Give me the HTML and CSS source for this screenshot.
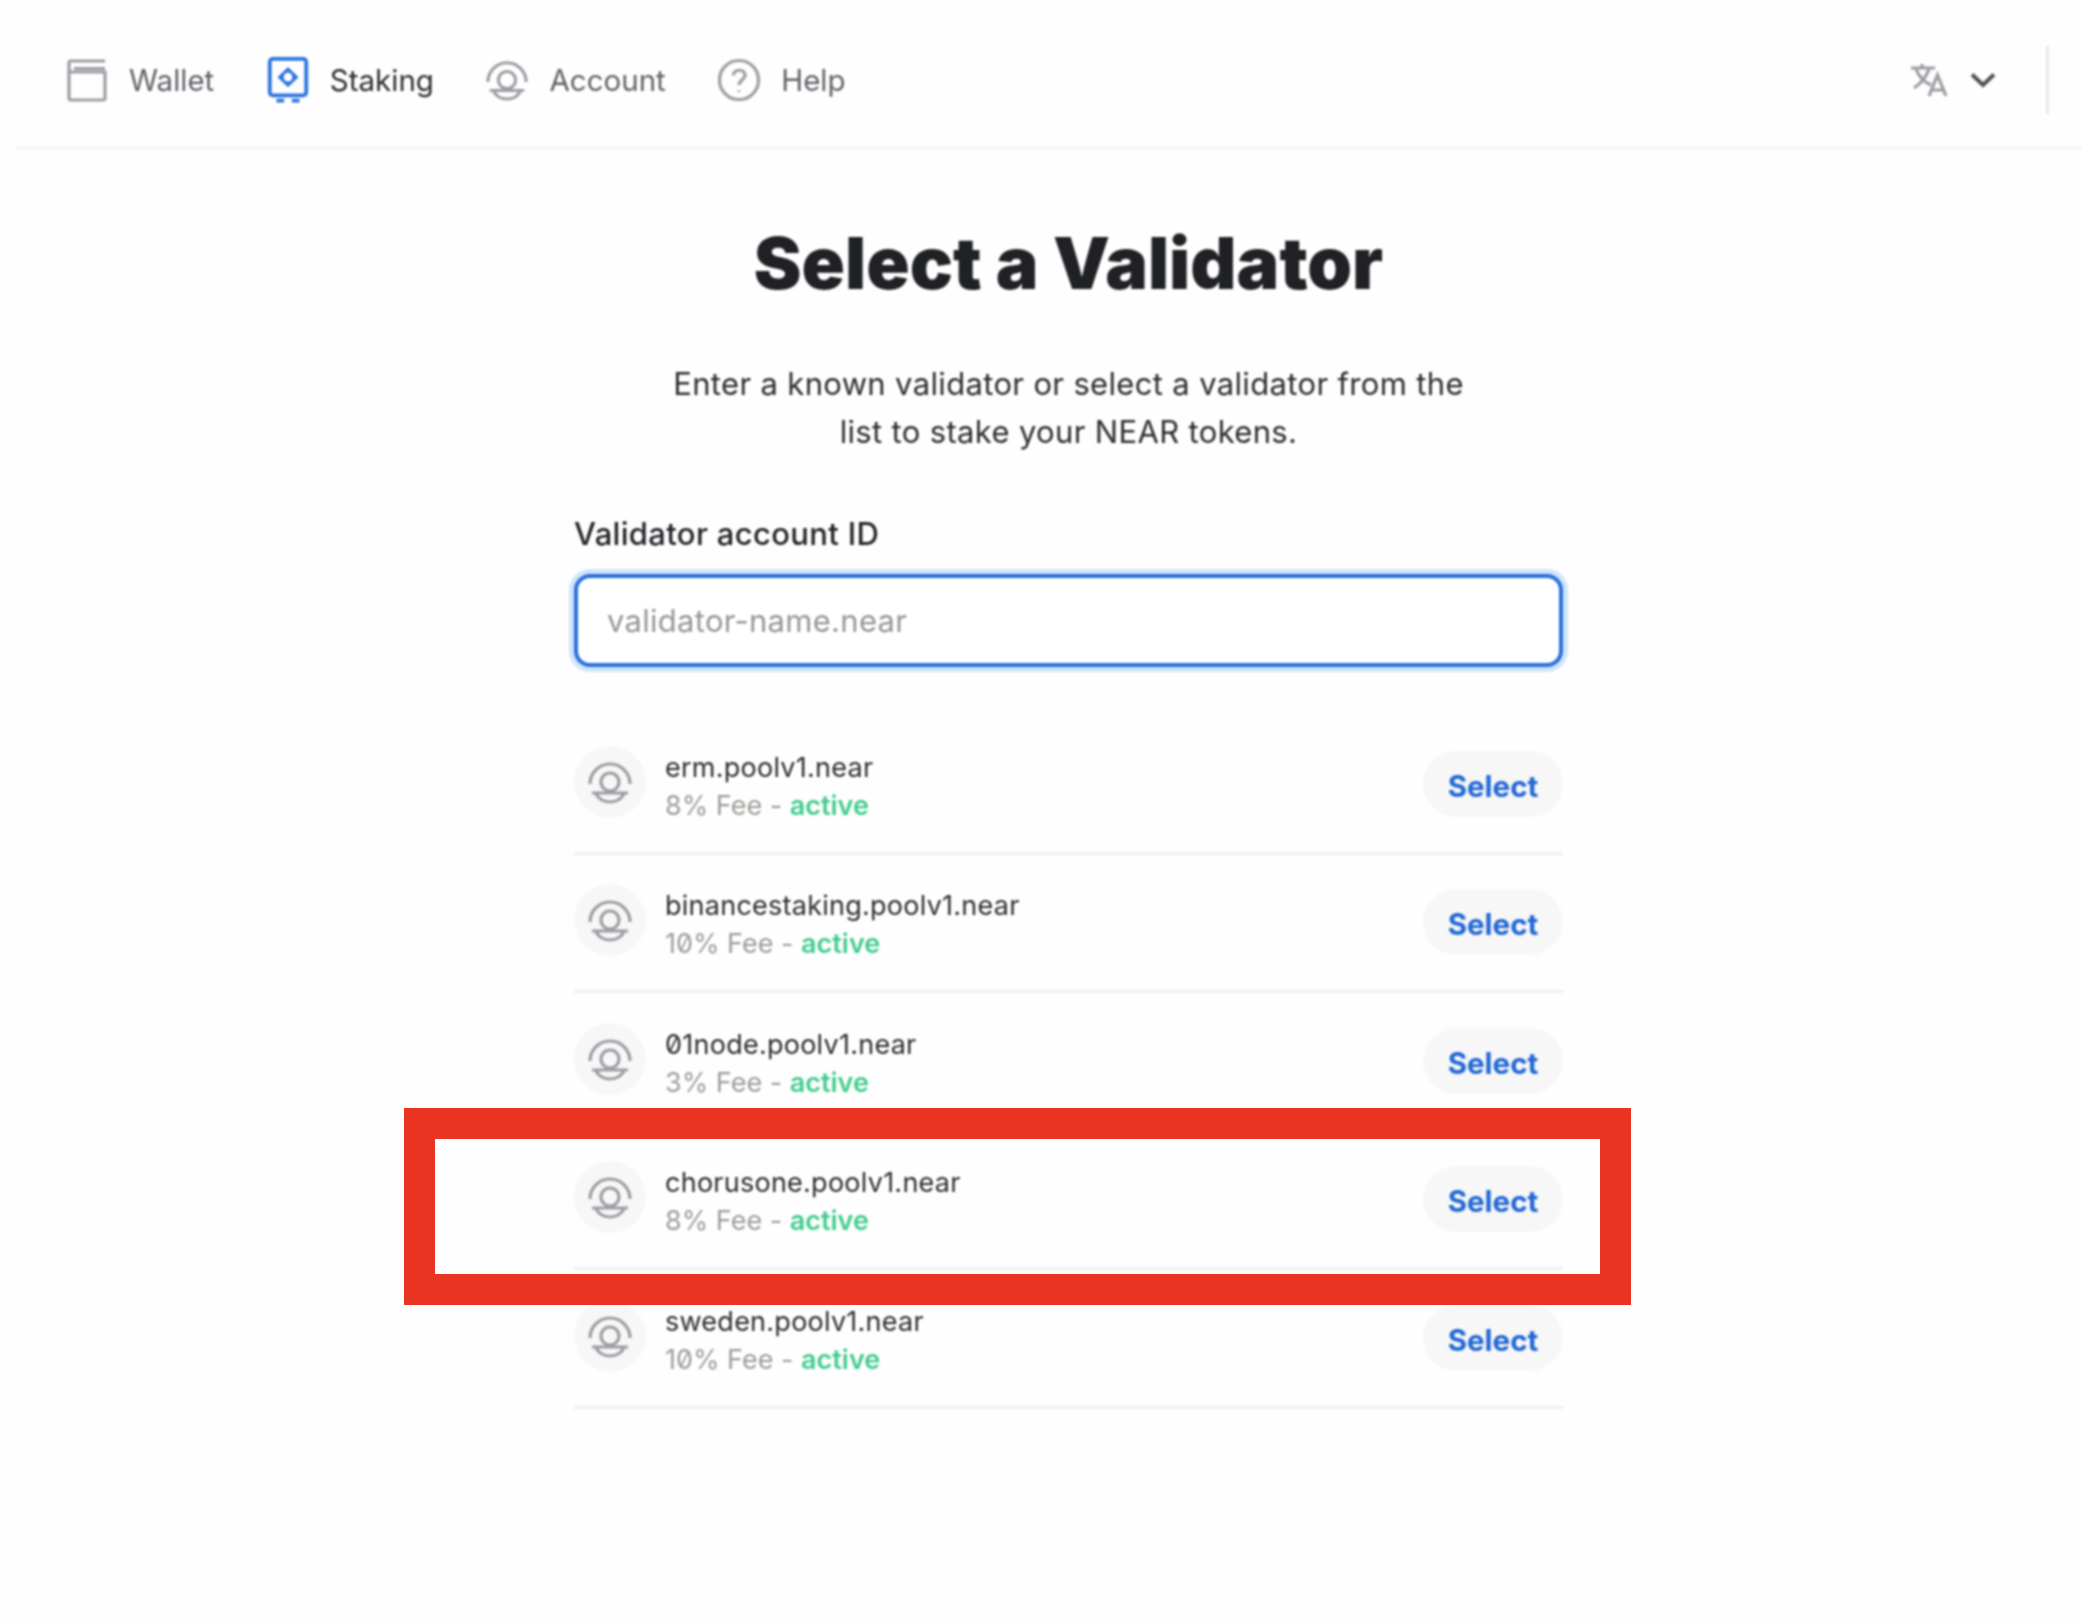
FILE: index.html
```html
<!DOCTYPE html>
<html lang="en">
<head>
    <meta charset="UTF-8">
    <meta name="viewport" content="width=device-width, initial-scale=1.0">
    <title>Select a Validator</title>
    <link rel="stylesheet" href="styles.css">
</head>
<body>
    <svg class="defs" width="0" height="0">
        <symbol id="user" viewBox="0 0 44 44">
            <path d="M2 24A20 20 0 0 1 42 24" />
            <circle cx="22" cy="22" r="9" />
            <path d="M4 33H40M8 33C10 39 16 42 22 42S34 39 36 33" />
        </symbol>
    </svg>

    <div class="page">
        <header class="topbar">
            <nav class="nav">
                <a class="nav-item">
                    <svg class="nav-icon" viewBox="0 0 42 44">
                        <path d="M3 14V5a2 2 0 0 1 2-2h34M3 14v26a2 2 0 0 0 2 2h32a2 2 0 0 0 2-2V14H3M8 10.500H39" />
                    </svg>
                    Wallet
                </a>
                <a class="nav-item active">
                    <svg class="nav-icon" viewBox="0 0 42 48">
                        <rect x="2" y="2" width="38" height="38" rx="3" />
                        <path class="solid" d="M21 10.500L32 21 21 31.500 10 21Z" />
                        <circle class="hole" cx="21" cy="21" r="4.500" />
                        <path d="M9 45.500H17M25 45.500H33" />
                    </svg>
                    Staking
                </a>
                <a class="nav-item">
                    <svg class="nav-icon"><use href="#user" /></svg>
                    Account
                </a>
                <a class="nav-item">
                    <svg class="nav-icon" viewBox="0 0 42 44">
                        <circle cx="21" cy="22" r="19.500" />
                        <path d="M15.500 17.500C15.500 10.500 27 10.500 27 17.500 27 21.500 21 22 21 27" />
                        <path d="M21 32.500V34" />
                    </svg>
                    Help
                </a>
            </nav>
            <div class="lang">
                <svg class="lang-icon" viewBox="0 0 38 34">
                    <path d="M1 5H25M12 1V5M19 6C16 15 10 21 4 25M6 6C9 14 14 19 21 22" />
                    <path d="M19 33L27.500 12 36 33M22 27H33" />
                </svg>
                <svg class="chevron" viewBox="0 0 26 16">
                    <path d="M2 2.500L13 13 24 2.500" />
                </svg>
            </div>
            <div class="divider"></div>
        </header>

        <main class="content">
            <h1 class="title">Select a Validator</h1>
            <p class="intro">Enter a known validator or select a validator from the<br>list to stake your NEAR tokens.</p>

            <label class="field-label" for="validator">Validator account ID</label>
            <input class="field" id="validator" type="text" placeholder="validator-name.near">

            <ul class="validators">
                <li class="validator">
                    <span class="avatar"><svg><use href="#user" /></svg></span>
                    <div class="info">
                        <div class="name">erm.poolv1.near</div>
                        <div class="fee">8% Fee - <span class="status">active</span></div>
                    </div>
                    <button class="select">Select</button>
                </li>
                <li class="validator">
                    <span class="avatar"><svg><use href="#user" /></svg></span>
                    <div class="info">
                        <div class="name">binancestaking.poolv1.near</div>
                        <div class="fee">10% Fee - <span class="status">active</span></div>
                    </div>
                    <button class="select">Select</button>
                </li>
                <li class="validator">
                    <span class="avatar"><svg><use href="#user" /></svg></span>
                    <div class="info">
                        <div class="name">01node.poolv1.near</div>
                        <div class="fee">3% Fee - <span class="status">active</span></div>
                    </div>
                    <button class="select">Select</button>
                </li>
                <li class="validator">
                    <span class="avatar"><svg><use href="#user" /></svg></span>
                    <div class="info">
                        <div class="name">chorusone.poolv1.near</div>
                        <div class="fee">8% Fee - <span class="status">active</span></div>
                    </div>
                    <button class="select">Select</button>
                </li>
                <li class="validator">
                    <span class="avatar"><svg><use href="#user" /></svg></span>
                    <div class="info">
                        <div class="name">sweden.poolv1.near</div>
                        <div class="fee">10% Fee - <span class="status">active</span></div>
                    </div>
                    <button class="select">Select</button>
                </li>
            </ul>
        </main>
    </div>

    <div class="highlight"></div>
</body>
</html>
```

FILE: styles.css
```css
* {
    box-sizing: border-box;
}

body {
    margin: 0;
    height: 1624px;
    overflow: hidden;
    position: relative;
    background-color: #fefefe;
    font-family: "Inter", "Liberation Sans", sans-serif;
    font-variant-numeric: slashed-zero;
    color: #2b2c30;
}

.defs {
    position: absolute;
}

/* the source is an upscaled image, everything but the red frame is soft */
.page {
    filter: blur(0.9px);
}

/* top bar */

.topbar {
    display: flex;
    align-items: center;
    height: 150px;
    margin-left: 16px;
    padding: 13px 33px 0 50px;
    border-bottom: 4px solid #f6f6f6;
}

.nav {
    display: flex;
    align-items: center;
    gap: 52.5px;
}

.nav-item {
    display: flex;
    align-items: center;
    gap: 21px;
    font-size: 29.5px;
    color: #606168;
}

.nav-item.active {
    color: #2b2c30;
}

.nav-icon {
    width: 42px;
    height: 46px;
    fill: none;
    stroke: #9c9da3;
    stroke-width: 3.2;
}

.active .nav-icon {
    stroke: #2b75e0;
    stroke-width: 4;
}

.active .nav-icon .solid {
    fill: #2b75e0;
    stroke: none;
}

.active .nav-icon .hole {
    fill: #fff;
    stroke: none;
}

.lang {
    display: flex;
    align-items: center;
    gap: 22px;
    margin-left: auto;
}

.lang-icon {
    width: 38px;
    height: 34px;
    fill: none;
    stroke: #9c9da3;
    stroke-width: 3.2;
}

.chevron {
    width: 26px;
    height: 16px;
    fill: none;
    stroke: #52535a;
    stroke-width: 4;
}

.divider {
    width: 3px;
    height: 68px;
    margin-left: 50px;
    background-color: #e8e8ea;
}

/* main column */

.content {
    width: 989px;
    margin-left: 574px;
}

.title {
    margin: 68px 0 0;
    font-size: 71.7px;
    line-height: 90px;
    font-weight: 900;
    text-align: center;
    color: #1f2124;
}

.intro {
    margin: 52px 0 0;
    font-size: 31px;
    line-height: 48px;
    letter-spacing: 0.34px;
    text-align: center;
}

.field-label {
    display: block;
    margin-top: 54px;
    font-size: 31px;
    line-height: 48px;
    font-weight: 500;
    letter-spacing: 0.33px;
    color: #222327;
}

.field {
    display: block;
    width: 100%;
    height: 93px;
    margin-top: 16px;
    padding: 0 29px;
    border: 4px solid #2b6fd9;
    border-radius: 16px;
    box-shadow: 0 0 0 5px #cfe5fd;
    font-family: inherit;
    font-size: 31px;
    letter-spacing: 0.28px;
    color: #2b2c30;
    background-color: #fff;
    outline: none;
}

.field::placeholder {
    color: #969696;
}

.validators {
    margin: 49px 0 0;
    padding: 0;
    list-style: none;
}

.validator {
    display: flex;
    align-items: center;
    height: 138.5px;
    border-bottom: 3px solid #f0f0f0;
}

.avatar {
    display: flex;
    align-items: center;
    justify-content: center;
    flex-shrink: 0;
    width: 72px;
    height: 72px;
    margin-bottom: 4px;
    border-radius: 50%;
    background-color: #f7f7f7;
}

.avatar svg {
    width: 44px;
    height: 44px;
    fill: none;
    stroke: #9c9da3;
    stroke-width: 3.2;
}

.info {
    margin-left: 19px;
    margin-right: auto;
    padding-top: 6px;
}

.name {
    font-size: 27px;
    line-height: 38px;
    letter-spacing: 0.25px;
    color: #2b2c30;
}

.fee {
    font-size: 27px;
    line-height: 38px;
    color: #9e9c98;
}

.status {
    font-weight: 600;
    color: #41cc8c;
}

.select {
    width: 140px;
    height: 66px;
    padding: 4px 0 0;
    border: none;
    border-radius: 33px;
    background-color: #f7f7f7;
    font-family: inherit;
    font-size: 29.5px;
    font-weight: 700;
    color: #2268d6;
}

/* red annotation drawn over the list */

.highlight {
    position: absolute;
    left: 404px;
    top: 1108px;
    width: 1227px;
    height: 197px;
    border: solid #e93323;
    border-width: 31px;
}
```
